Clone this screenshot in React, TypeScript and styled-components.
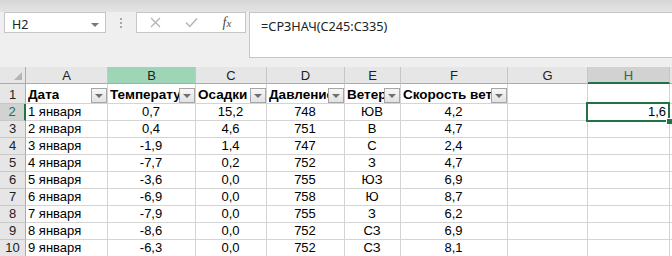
import React from 'react';
import styled, { createGlobalStyle, css } from 'styled-components';

const Global = createGlobalStyle`
  html, body { margin: 0; padding: 0; background: #fff; overflow: hidden; }
  #root { width: 672px; height: 256px; overflow: hidden; }
`;

const Window = styled.div`
  width: 672px;
  height: 256px;
  overflow: hidden;
  display: flex;
  flex-direction: column;
  background: #fff;
`;

const TopStrip = styled.div`
  flex: none;
  height: 12px;
  background: linear-gradient(#d6d6d6, #e4e4e4);
`;

const FormulaArea = styled.div`
  flex: none;
  height: 55px;
  box-sizing: border-box;
  background: #efefef;
  display: flex;
  align-items: flex-start;
  padding-left: 4px;
  font-family: "Noto Sans", "Open Sans", sans-serif;
  color: #222;
`;

const NameBox = styled.div`
  width: 102px;
  height: 21px;
  box-sizing: border-box;
  border: 1px solid #c6c6c6;
  background: #fff;
  display: flex;
  align-items: flex-start;
  justify-content: space-between;
  padding: 5px 6px 0 7px;
  font-size: 12.5px;
  line-height: 14px;
`;

const Caret = styled.span`
  width: 0;
  height: 0;
  margin-top: 5px;
  border-left: 4px solid transparent;
  border-right: 4px solid transparent;
  border-top: 4px solid #777;
`;

const Separator = styled.div`
  width: 30px;
  height: 21px;
  display: flex;
  flex-direction: column;
  align-items: center;
  justify-content: center;
  gap: 2px;
`;

const Dot = styled.span`
  width: 2px;
  height: 2px;
  background: #a8a8a8;
`;

const ActionBox = styled.div`
  width: 110px;
  height: 21px;
  box-sizing: border-box;
  border: 1px solid #c6c6c6;
  background: #fff;
  display: grid;
  grid-template-columns: repeat(3, 1fr);
  align-items: center;
  justify-items: center;
`;

const Fx = styled.span`
  font-family: "Liberation Serif", serif;
  font-style: italic;
  font-size: 14px;
  color: #4a4a4a;
  line-height: 14px;
  & small { font-size: 11px; }
`;

const FormulaInput = styled.div`
  flex: 1;
  height: 46px;
  margin-left: 3px;
  box-sizing: border-box;
  border: 1px solid #c6c6c6;
  border-right: none;
  background: #fff;
  padding: 4px 0 0 11px;
  font-size: 12.7px;
  line-height: 18px;
  white-space: nowrap;
`;

const Sheet = styled.div`
  flex: none;
  display: grid;
  grid-template-columns: 26px 82px 88px 71px 78px 56px 107px 80px 82px 1fr;
  grid-template-rows: 17px 20px repeat(10, 17px);
  font-family: "Liberation Sans", Arial, sans-serif;
  color: #000;
`;

const HeaderBase = css`
  box-sizing: border-box;
  display: flex;
  align-items: center;
  justify-content: center;
  background: #e6e6e6;
  font-size: 13px;
  line-height: 15px;
  color: #222;
`;

const ColHeader = styled.div<{ $state?: 'ref' | 'active' }>`
  ${HeaderBase};
  border-right: 1px solid #c6c6c6;
  border-bottom: 1px solid #ababab;
  padding-top: 1px;
  ${p => p.$state === 'ref' && css`
    background: #9fd5b7;
  `}
  ${p => p.$state === 'active' && css`
    background: #d2d2d2;
    color: #217346;
    border-bottom: 2px solid #217346;
  `}
`;

const Corner = styled.div`
  ${HeaderBase};
  border-right: 1px solid #ababab;
  border-bottom: 1px solid #ababab;
  justify-content: flex-end;
  align-items: flex-end;
  padding: 0 3px 3px 0;
`;

const RowHeader = styled.div<{ $active?: boolean }>`
  ${HeaderBase};
  border-right: 1px solid #ababab;
  border-bottom: 1px solid #c8c8c8;
  align-items: flex-end;
  padding-bottom: 1px;
  ${p => p.$active && css`
    background: #d2d2d2;
    color: #217346;
    border-right: 2px solid #217346;
  `}
`;

type Align = 'left' | 'center' | 'right';

const Cell = styled.div<{ $align?: Align; $bold?: boolean; $active?: boolean }>`
  position: relative;
  box-sizing: border-box;
  border-right: 1px solid #d4d4d4;
  border-bottom: 1px solid #d4d4d4;
  display: flex;
  align-items: flex-end;
  justify-content: ${p =>
    p.$align === 'center' ? 'center' : p.$align === 'right' ? 'flex-end' : 'flex-start'};
  padding: 0 3px 1px 2px;
  font-size: ${p => (p.$bold ? '13.5px' : '13px')};
  line-height: 15px;
  font-weight: ${p => (p.$bold ? 700 : 400)};
  white-space: nowrap;
  overflow: ${p => (p.$active ? 'visible' : 'hidden')};
`;

const Selection = styled.div`
  position: absolute;
  left: -2px;
  top: -2px;
  right: -1px;
  bottom: -2px;
  border: 2px solid #217346;
  z-index: 2;
  pointer-events: none;
`;

const FillHandle = styled.span`
  position: absolute;
  right: -4px;
  bottom: -4px;
  width: 5px;
  height: 5px;
  background: #217346;
  border-left: 1px solid #fff;
  border-top: 1px solid #fff;
`;

const FilterButton = styled.span`
  position: absolute;
  right: 0;
  bottom: 0;
  width: 16px;
  height: 15px;
  box-sizing: border-box;
  border: 1px solid #a6a6a6;
  background: linear-gradient(#f7f7f7, #e2e2e2);
  display: flex;
  align-items: center;
  justify-content: center;
  &::after {
    content: '';
    width: 0;
    height: 0;
    margin-top: 1px;
    border-left: 4px solid transparent;
    border-right: 4px solid transparent;
    border-top: 4px solid #707070;
  }
`;

const HeaderText = styled.span`
  overflow: hidden;
`;

const columns = ['A', 'B', 'C', 'D', 'E', 'F', 'G', 'H', ''];
const headers = ['Дата', 'Температура', 'Осадки', 'Давление', 'Ветер', 'Скорость ветра'];

const rows: string[][] = [
  ['1 января', '0,7', '15,2', '748', 'ЮВ', '4,2'],
  ['2 января', '0,4', '4,6', '751', 'В', '4,7'],
  ['3 января', '-1,9', '1,4', '747', 'С', '2,4'],
  ['4 января', '-7,7', '0,2', '752', 'З', '4,7'],
  ['5 января', '-3,6', '0,0', '755', 'ЮЗ', '6,9'],
  ['6 января', '-6,9', '0,0', '758', 'Ю', '8,7'],
  ['7 января', '-7,9', '0,0', '755', 'З', '6,2'],
  ['8 января', '-8,6', '0,0', '752', 'СЗ', '6,9'],
  ['9 января', '-6,3', '0,0', '752', 'СЗ', '8,1'],
  ['', '', '', '', '', ''],
];

export default function App() {
  return (
    <Window>
      <Global />
      <TopStrip />
      <FormulaArea>
        <NameBox>
          <span>H2</span>
          <Caret />
        </NameBox>
        <Separator>
          <Dot />
          <Dot />
          <Dot />
        </Separator>
        <ActionBox>
          <svg width="11" height="11" viewBox="0 0 11 11">
            <path d="M1 1 L10 10 M10 1 L1 10" stroke="#b3b3b3" strokeWidth="1.3" fill="none" />
          </svg>
          <svg width="13" height="11" viewBox="0 0 13 11">
            <path d="M1 5.5 L4.8 9.5 L12 1.5" stroke="#b3b3b3" strokeWidth="1.4" fill="none" />
          </svg>
          <Fx>
            f<small>x</small>
          </Fx>
        </ActionBox>
        <FormulaInput>=СРЗНАЧ(C245:C335)</FormulaInput>
      </FormulaArea>
      <Sheet>
        <Corner>
          <svg width="8" height="8" viewBox="0 0 8 8">
            <path d="M8 0 L8 8 L0 8 Z" fill="#b5b5b5" />
          </svg>
        </Corner>
        {columns.map((c, i) => (
          <ColHeader key={i} $state={c === 'B' ? 'ref' : c === 'H' ? 'active' : undefined}>
            {c}
          </ColHeader>
        ))}

        <RowHeader>1</RowHeader>
        {headers.map(h => (
          <Cell key={h} $bold>
            <HeaderText>{h}</HeaderText>
            <FilterButton />
          </Cell>
        ))}
        <Cell />
        <Cell />
        <Cell />

        {rows.map((r, ri) => (
          <React.Fragment key={ri}>
            <RowHeader $active={ri === 0}>{ri + 2}</RowHeader>
            {r.map((v, ci) => (
              <Cell key={ci} $align={ci === 0 ? 'left' : 'center'}>
                {v}
              </Cell>
            ))}
            <Cell />
            {ri === 0 ? (
              <Cell $align="right" $active>
                1,6
                <Selection>
                  <FillHandle />
                </Selection>
              </Cell>
            ) : (
              <Cell />
            )}
            <Cell />
          </React.Fragment>
        ))}
      </Sheet>
    </Window>
  );
}
